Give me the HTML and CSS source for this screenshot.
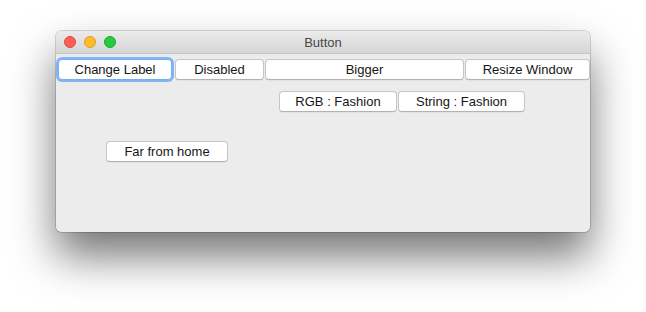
FILE: index.html
```html
<!DOCTYPE html>
<html>
<head>
<meta charset="utf-8">
<link rel="stylesheet" href="styles.css">
</head>
<body>
<div class="window">
  <div class="titlebar">
    <div class="lights">
      <span class="light red"></span>
      <span class="light yellow"></span>
      <span class="light green"></span>
    </div>
    <div class="title">Button</div>
  </div>
  <div class="content">
    <div class="row row1">
      <button class="btn focused w-change">Change Label</button>
      <button class="btn w-disabled">Disabled</button>
      <button class="btn w-bigger">Bigger</button>
      <button class="btn w-resize">Resize Window</button>
    </div>
    <div class="row row2">
      <button class="btn w-rgb">RGB : Fashion</button>
      <button class="btn w-string">String : Fashion</button>
    </div>
    <div class="row row3">
      <button class="btn w-far">Far from home</button>
    </div>
  </div>
</div>
</body>
</html>
```

FILE: styles.css
```css
html, body {
  margin: 0;
  padding: 0;
  background: #ffffff;
}
html {
  height: 100%;
}
body {
  box-sizing: border-box;
  min-height: 312px;
  padding: 31px 0 0 56px;
  font-family: "Liberation Sans", Arial, sans-serif;
}
.window {
  width: 534px;
  height: 201px;
  background: #ececec;
  border-radius: 5px;
  box-shadow: 0 0 0 0.5px rgba(0,0,0,0.3), 0 24px 44px rgba(0,0,0,0.55);
  overflow: hidden;
  display: flex;
  flex-direction: column;
}
.titlebar {
  height: 22px;
  flex: none;
  background: linear-gradient(#ebebeb, #d6d6d6);
  border-bottom: 1px solid #c4c4c4;
  position: relative;
  display: flex;
  align-items: center;
  justify-content: center;
}
.lights {
  position: absolute;
  left: 8px;
  top: 5px;
  display: flex;
  gap: 8px;
}
.light {
  width: 12px;
  height: 12px;
  border-radius: 50%;
  box-sizing: border-box;
}
.red { background: #fc5f57; border: 0.5px solid #df4640; }
.yellow { background: #fdbc2e; border: 0.5px solid #de9f1d; }
.green { background: #28c840; border: 0.5px solid #1ca82c; }
.title {
  font-size: 13px;
  color: #474747;
}
.content {
  flex: 1;
  display: flex;
  flex-direction: column;
}
.row {
  display: flex;
}
.row1 {
  margin-top: 5px;
}
.row2 {
  margin-top: 11px;
  margin-left: 223px;
}
.row3 {
  margin-top: 29px;
  margin-left: 50px;
}
.btn {
  height: 21px;
  box-sizing: border-box;
  background: #ffffff;
  border: 1px solid #c6c6c6;
  border-bottom-color: #b2b2b2;
  border-radius: 4px;
  font-family: "Liberation Sans", Arial, sans-serif;
  font-size: 13px;
  color: #161616;
  padding: 0;
  margin: 0;
  line-height: 19px;
  box-shadow: 0 0.5px 0.5px rgba(0,0,0,0.08);
}
.btn.focused {
  border: 1px solid #78aef0;
  box-shadow: 0 0 0 2px #80b6f4;
}
.w-change { width: 114px; margin-left: 2px; margin-right: 3px; }
.w-disabled { width: 89px; margin-right: 1px; }
.w-bigger { width: 199px; margin-right: 1px; }
.w-resize { width: 125px; }
.w-rgb { width: 118px; }
.w-string { width: 127px; margin-left: 1px; }
.w-far { width: 122px; }
```
